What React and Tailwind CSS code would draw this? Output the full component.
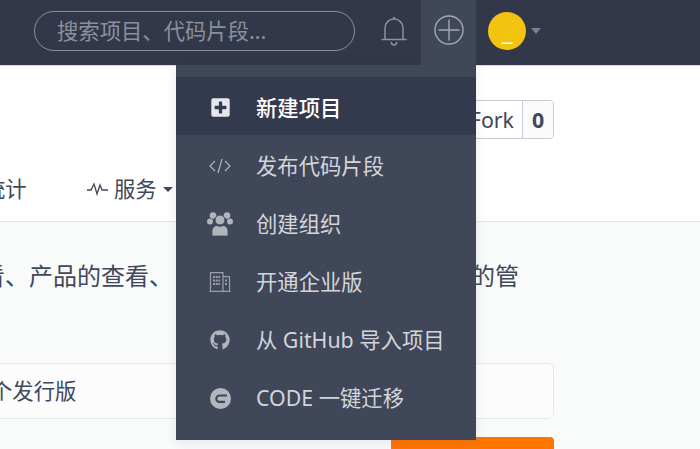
import { FaPlusSquare, FaGithub } from 'react-icons/fa'

const font = { fontFamily: '"Noto Sans", "Noto Sans CJK SC", sans-serif' }

function Bell() {
  return (
    <svg viewBox="0 0 26 32" className="h-[32px] w-[26px]" fill="none" stroke="#8b909c" strokeWidth="1.5" aria-hidden="true">
      <path d="M4 24V13c0-5 4-9 9-9s9 4 9 9v11" />
      <path d="M1 24.500h24" strokeLinecap="round" />
      <path d="M13 4V2" strokeWidth="2" />
      <path d="M10 27c.5 2 1.500 3 3 3s2.500-1 3-3" />
    </svg>
  )
}

function PlusCircle() {
  return (
    <svg viewBox="0 0 30 30" className="h-[30px] w-[30px]" fill="none" stroke="#a3a8b3" strokeWidth="1.400" aria-hidden="true">
      <circle cx="15" cy="15" r="14" />
      <path d="M15 4.500v21M4.500 15h21" />
    </svg>
  )
}

function CodeIcon() {
  return (
    <svg viewBox="0 0 22 16" className="h-[16px] w-[22px]" fill="none" stroke="#b0b4bd" strokeWidth="1.200" aria-hidden="true">
      <path d="M6 3 1 8l5 5M16 3l5 5-5 5M13 1 9 15" />
    </svg>
  )
}

function UsersIcon() {
  return (
    <svg viewBox="0 0 26 24" className="h-[24px] w-[26px]" fill="#b0b4bd" aria-hidden="true">
      <circle cx="6" cy="3.500" r="3.300" />
      <circle cx="20" cy="3.500" r="3.300" />
      <circle cx="3" cy="9.500" r="3" />
      <circle cx="23" cy="9.500" r="3" />
      <circle cx="13" cy="8" r="5" stroke="#3f4759" strokeWidth="1" />
      <path d="M5 24v-5c0-3 2-5 4.500-5.500 2 1 5 1 7 0C19 14 21 16 21 19v5z" stroke="#3f4759" strokeWidth=".8" />
    </svg>
  )
}

function BuildingIcon() {
  return (
    <svg viewBox="0 0 22 20" className="h-[20px] w-[22px]" fill="none" stroke="#9a9ea9" strokeWidth="1.200" aria-hidden="true">
      <path d="M.5 19.400h21M1.500 19.400V.6h12.500v18.800M14 4.600h6.500v14.800" />
      <path d="M4 5h7M4 8.500h7M4 12h7M16 8.500h2.500M16 12h2.500" strokeWidth="2" strokeDasharray="2 .7" />
    </svg>
  )
}

function CodeLogo() {
  return (
    <svg viewBox="0 0 21 21" className="h-[21px] w-[21px]" aria-hidden="true">
      <circle cx="10.500" cy="10.500" r="10.500" fill="#b3b6be" />
      <path d="M17 7.500H9.500a3.200 3.200 0 0 0 0 6.400H15" fill="none" stroke="#3f4759" strokeWidth="2.200" />
    </svg>
  )
}

const menu = [
  { label: '发布代码片段', icon: <CodeIcon /> },
  { label: '创建组织', icon: <UsersIcon /> },
  { label: '开通企业版', icon: <BuildingIcon /> },
  { label: '从 GitHub 导入项目', icon: <FaGithub className="h-[20px] w-[20px] text-[#b0b4bd]" /> },
  { label: 'CODE 一键迁移', icon: <CodeLogo /> },
]

export default function App() {
  return (
    <div className="relative h-[449px] w-[700px] overflow-hidden bg-[#f9fafa]" style={font}>
      <header className="flex h-[65px] items-center bg-[#323849]">
        <div className="mb-[4px] ml-[34px] flex h-[40px] w-[321px] items-center rounded-full border border-[#8b8f9b] pl-[22px] text-[21.33px] text-[#8b909c]">
          搜索项目、代码片段...
        </div>
        <div className="mb-[4px] flex w-[66px] justify-center pl-[12px]">
          <Bell />
        </div>
        <div className="flex h-[65px] w-[55px] items-center justify-center bg-[#3f4759] pb-[5px]">
          <PlusCircle />
        </div>
        <div className="mb-[4px] ml-[12px] flex h-[38px] w-[38px] items-center justify-center rounded-full bg-[#f2c40f] text-[24px] leading-none text-white">
          _
        </div>
        <div className="mb-[4px] ml-[5px] h-0 w-0 border-x-[5.500px] border-t-[6px] border-x-transparent border-t-[#7c818e]" />
      </header>

      <section className="h-[157px] border-y border-y-[#e3e5e9] border-t-[#d9dbe0] bg-white">
        <div className="flex justify-end pr-[146px] pt-[34px]">
          <div className="flex h-[39px] overflow-hidden rounded border border-[#c8ccd6] text-[21.33px] leading-[37px] text-[#40485b]">
            <span className="px-2">Fork</span>
            <span className="w-[31px] border-l border-[#c8ccd6] bg-[#fbfbfc] text-center font-bold">0</span>
          </div>
        </div>
        <nav className="mt-[34px] flex items-center text-[21.33px] leading-[32px] text-[#40485b]">
          <span className="-ml-[16px] w-[103px]">统计</span>
          <svg viewBox="0 0 22 14" className="h-[14px] w-[22px]" fill="none" stroke="#40485b" strokeWidth="1.300" aria-hidden="true">
            <path d="M0 8h4l3-6 3 10 3-9 2 5h6" />
          </svg>
          <span className="ml-[5px]">服务</span>
          <span className="ml-[6px] h-0 w-0 border-x-[5px] border-t-[5px] border-x-transparent border-t-[#40485b]" />
        </nav>
      </section>

      <main className="text-[#40485b]">
        <p className="-ml-[19px] mt-[35px] whitespace-nowrap text-[24px] leading-[38px]">
          看、产品的查看、<span className="ml-[298px]">的管</span>
        </p>
        <div className="-ml-[10px] mt-[68px] flex h-[56px] w-[564px] items-center rounded-md border border-[#e6eaef] bg-[#fcfcfd] text-[21.33px]">
          <span>个发行版</span>
        </div>
        <div className="ml-[391px] mt-[18px] h-[40px] w-[163px] rounded bg-[#ff7500]" />
      </main>

      <div className="absolute left-[176px] top-[65px] h-[375px] w-[300px] bg-[#3f4759] pt-[12px] shadow-[0_2px_10px_rgba(60,70,90,0.12)]">
        <div className="flex h-[58px] items-center bg-[#343a4e] pt-[3px] text-[21.33px] font-medium text-white">
          <div className="flex w-[80px] justify-center pl-[8px]">
            <FaPlusSquare className="h-[21px] w-[21px] text-[#e6e7ea]" />
          </div>
          新建项目
        </div>
        {menu.map((item) => (
          <div key={item.label} className="flex h-[58px] items-center pt-[4px] text-[21.33px] text-[#d3d5da]">
            <div className="flex w-[80px] justify-center pl-[8px]">{item.icon}</div>
            {item.label}
          </div>
        ))}
      </div>
    </div>
  )
}
